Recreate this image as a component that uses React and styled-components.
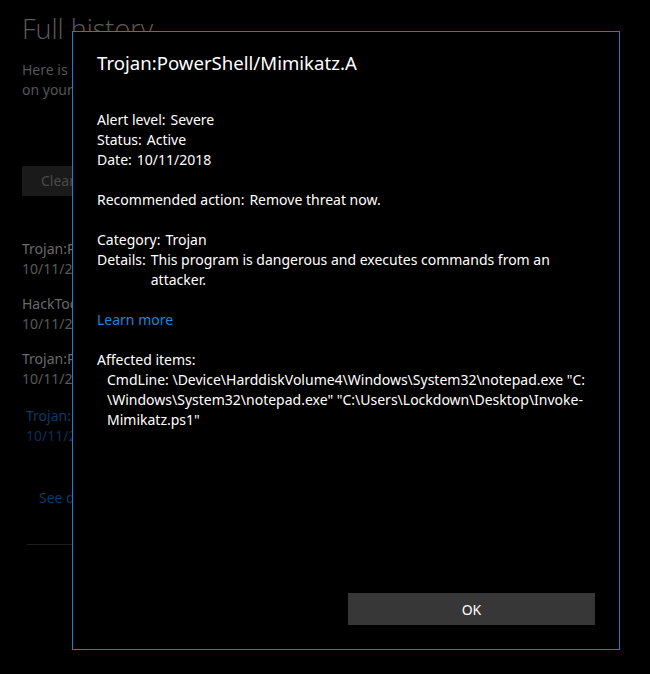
import React from "react";
import styled, { createGlobalStyle } from "styled-components";

const GlobalStyle = createGlobalStyle`
  html, body {
    margin: 0;
    background: #000;
  }
  body {
    font-family: "Noto Sans", "Open Sans", sans-serif;
    color: #fff;
  }
`;

const Screen = styled.div`
  position: relative;
  width: 650px;
  height: 674px;
  overflow: hidden;
  background: #000;
`;

/* the history page behind the dialog, already dimmed */
const Behind = styled.div`
  padding: 12px 0 0 22px;
  display: flex;
  flex-direction: column;
`;

// only a strip of the page shows left of the dialog
const Strip = styled.div`
  width: 50px;
  overflow: hidden;
  white-space: nowrap;
  display: flex;
  flex-direction: column;
`;

const PageTitle = styled.h1`
  margin: 0;
  font-family: "Open Sans", "Noto Sans", sans-serif;
  font-size: 27px;
  font-weight: 300;
  line-height: 34px;
  color: #5c5c5c;
`;

const Intro = styled.p`
  margin: 14px 0 0;
  font-size: 14px;
  line-height: 20px;
  color: #555;
`;

const ClearButton = styled.div`
  margin-top: 66px;
  width: 120px;
  height: 30px;
  background: #1a1a1a;
  color: #4a4a4a;
  font-size: 14px;
  line-height: 30px;
  padding-left: 19px;
  box-sizing: border-box;
`;

const HistoryList = styled.div`
  margin-top: 43px;
  display: flex;
  flex-direction: column;
  gap: 15px;
`;

const HistoryItem = styled.div`
  padding-left: ${(p) => (p.$selected ? "4px" : "0")};
  margin-top: ${(p) => (p.$selected ? "2px" : "0")};
  display: flex;
  flex-direction: column;
  font-size: 14px;
  line-height: 20px;
  color: ${(p) => (p.$selected ? "#0d3a66" : "#6a6a6a")};
`;

const HistoryDate = styled.span`
  color: ${(p) => (p.$selected ? "#0b3058" : "#5a5a5a")};
`;

const SeeMore = styled.div`
  margin: 42px 0 0 17px;
  font-size: 14px;
  line-height: 20px;
  color: #0d3a66;
`;

const Rule = styled.div`
  margin: 36px 0 0 5px;
  height: 1px;
  width: 120px;
  background: #1e1e1e;
`;

const Dialog = styled.div`
  position: absolute;
  left: 72px;
  top: 31px;
  width: 548px;
  height: 619px;
  box-sizing: border-box;
  border: 1px solid #1a7fd4;
  background: #000;
  padding: 17px 24px 24px;
  display: flex;
  flex-direction: column;
  font-size: 14px;
  line-height: 20px;
`;

const Title = styled.h2`
  margin: 0 0 33px;
  font-size: 18.6px;
  font-weight: 400;
  line-height: 28px;
`;

const Section = styled.div`
  margin-bottom: 20px;
`;

const Row = styled.div`
  display: flex;
  gap: 5px;
`;

const Label = styled.span`
  flex: none;
`;

const Value = styled.span`
  flex: 1;
`;

const Link = styled.a`
  color: #1a86dc;
  text-decoration: none;
`;

const Items = styled.div`
  padding-left: 10px;
  white-space: nowrap;
`;

const Footer = styled.div`
  margin-top: auto;
  display: grid;
  grid-template-columns: 1fr 1fr;
  gap: 4px;
`;

const OkButton = styled.button`
  grid-column: 2;
  height: 32px;
  border: none;
  background: #373737;
  color: #fff;
  font-family: inherit;
  font-size: 14px;
`;

const history = [
  { name: "Trojan:PowerShell/Mimikatz.A", date: "10/11/2018" },
  { name: "HackTool:Win32/Mimikatz", date: "10/11/2018" },
  { name: "Trojan:PowerShell/Mimikatz.A", date: "10/11/2018" },
  { name: "Trojan:PowerShell/Mimikatz.A", date: "10/11/2018", selected: true },
];

export default function App() {
  return (
    <>
      <GlobalStyle />
      <Screen>
        <Behind>
          <PageTitle>Full history</PageTitle>
          <Strip>
            <Intro>
              Here is
              <br />
              on your
            </Intro>
            <ClearButton>Clear</ClearButton>
            <HistoryList>
              {history.map((h, i) => (
                <HistoryItem key={i} $selected={h.selected}>
                  <span>{h.name}</span>
                  <HistoryDate $selected={h.selected}>{h.date}</HistoryDate>
                </HistoryItem>
              ))}
            </HistoryList>
            <SeeMore>See details</SeeMore>
            <Rule />
          </Strip>
        </Behind>

        <Dialog>
          <Title>Trojan:PowerShell/Mimikatz.A</Title>
          <Section>
            <Row>
              <Label>Alert level:</Label>
              <Value>Severe</Value>
            </Row>
            <Row>
              <Label>Status:</Label>
              <Value>Active</Value>
            </Row>
            <Row>
              <Label>Date:</Label>
              <Value>10/11/2018</Value>
            </Row>
          </Section>
          <Section>
            <Row>
              <Label>Recommended action:</Label>
              <Value>Remove threat now.</Value>
            </Row>
          </Section>
          <Section>
            <Row>
              <Label>Category:</Label>
              <Value>Trojan</Value>
            </Row>
            <Row>
              <Label>Details:</Label>
              <Value>
                This program is dangerous and executes commands from an
                <br />
                attacker.
              </Value>
            </Row>
          </Section>
          <Section>
            <Link href="#">Learn more</Link>
          </Section>
          <Section>
            <div>Affected items:</div>
            <Items>
              CmdLine: \Device\HarddiskVolume4\Windows\System32\notepad.exe "C:
              <br />
              \Windows\System32\notepad.exe" "C:\Users\Lockdown\Desktop\Invoke-
              <br />
              Mimikatz.ps1"
            </Items>
          </Section>
          <Footer>
            <OkButton>OK</OkButton>
          </Footer>
        </Dialog>
      </Screen>
    </>
  );
}
